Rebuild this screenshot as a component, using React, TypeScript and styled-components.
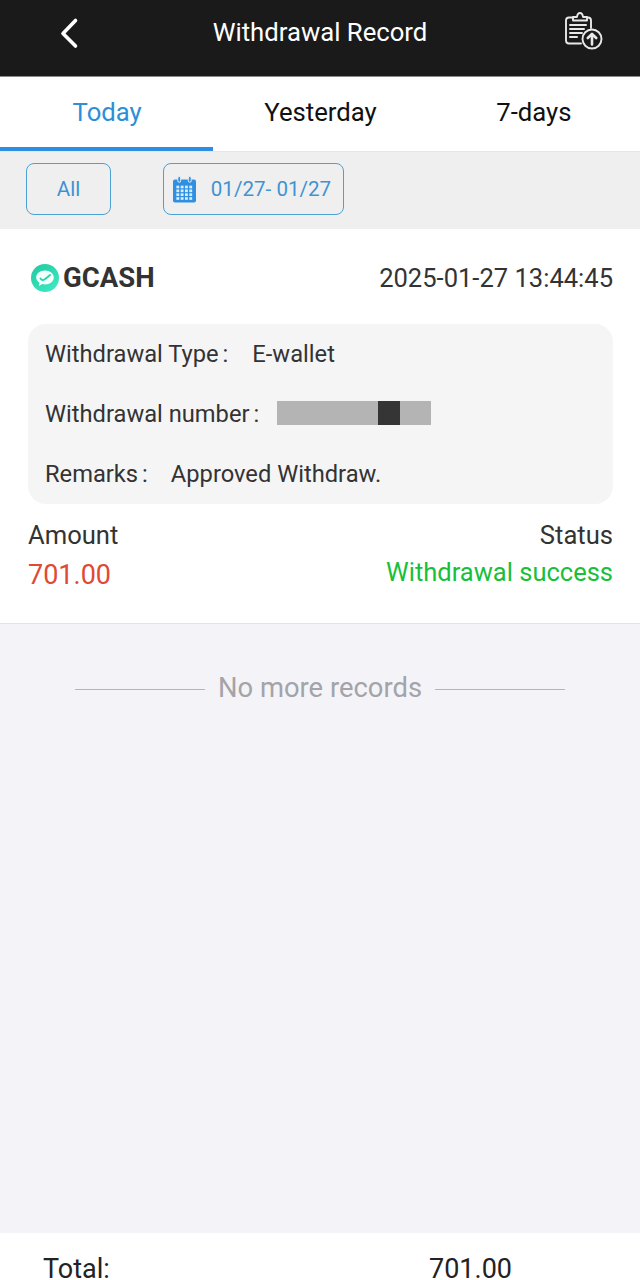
import React from "react";
import styled, { createGlobalStyle } from "styled-components";

const Global = createGlobalStyle`
  html, body { margin: 0; padding: 0; background: #f3f3f8; }
  body { font-family: Roboto, "Liberation Sans", sans-serif; }
`;

const Page = styled.div`
  width: 640px;
  height: 1280px;
  display: flex;
  flex-direction: column;
  overflow: hidden;
  background: #f3f3f8;
`;

const Header = styled.header`
  height: 77px;
  flex: none;
  display: grid;
  grid-template-columns: 1fr auto 1fr;
  align-items: center;
  padding: 0 37px 13px;
  box-sizing: border-box;
  background: #1a1a1a;
  border-bottom: 1px solid #8a8a8a;
  color: #fff;
`;

const Title = styled.h1`
  margin: 0;
  font-size: 25.7px;
  line-height: 32px;
  font-weight: 400;
`;

const BackIcon = styled.svg`
  display: block;
  justify-self: start;
  margin: 2px 0 0 21px;
`;

const UploadIcon = styled.svg`
  display: block;
  justify-self: end;
  margin-bottom: 3px;
`;

const Tabs = styled.nav`
  height: 75px;
  flex: none;
  display: grid;
  grid-template-columns: repeat(3, 1fr);
  background: #fff;
  border-bottom: 1px solid #e6e6e6;
  box-sizing: border-box;
`;

const Tab = styled.div<{ $active?: boolean }>`
  display: flex;
  align-items: center;
  justify-content: center;
  padding-left: 1px;
  font-size: 25.7px;
  color: ${(p) => (p.$active ? "#2e8fd6" : "#111")};
  border-bottom: 4px solid ${(p) => (p.$active ? "#2e8fe0" : "transparent")};
  box-sizing: border-box;
`;

const FilterBar = styled.div`
  height: 77px;
  flex: none;
  display: flex;
  align-items: flex-start;
  gap: 52px;
  padding: 11px 26px 0;
  box-sizing: border-box;
  background: #efeff0;
`;

const FilterButton = styled.div<{ $w: number; $trail?: number }>`
  width: ${(p) => p.$w}px;
  height: 52px;
  display: flex;
  align-items: center;
  justify-content: center;
  gap: 15px;
  padding-right: ${(p) => p.$trail ?? 0}px;
  box-sizing: border-box;
  border: 1px solid #4ba1d4;
  border-radius: 8px;
  color: #3f93d3;
  font-size: 20.6px;
`;

const Card = styled.section`
  height: 395px;
  flex: none;
  padding: 0 27px 0 28px;
  box-sizing: border-box;
  background: #fff;
  border-bottom: 1px solid #e3e3e6;
  display: flex;
  flex-direction: column;
`;

const CardTop = styled.div`
  height: 95px;
  flex: none;
  display: flex;
  align-items: center;
  justify-content: space-between;
  padding-top: 2px;
  box-sizing: border-box;
`;

const Brand = styled.div`
  display: flex;
  align-items: center;
  gap: 4px;
  padding-left: 3px;
  font-size: 27.5px;
  font-weight: 700;
  color: #333;
`;

const DateText = styled.div`
  font-size: 25.55px;
  color: #333;
`;

const Details = styled.div`
  height: 180px;
  flex: none;
  padding: 0 17px;
  display: flex;
  flex-direction: column;
  justify-content: space-around;
  box-sizing: border-box;
  background: #f5f5f6;
  border-radius: 18px;
`;

const DetailRow = styled.div`
  display: flex;
  align-items: center;
  font-size: 23.7px;
  color: #333;
`;

const Label = styled.span<{ $gap: number }>`
  margin-right: ${(p) => p.$gap}px;
`;

const Colon = styled.span`
  margin-left: 4px;
`;

const Redacted = styled.div`
  width: 154px;
  height: 24px;
  margin-bottom: 2px;
  display: flex;
  justify-content: flex-end;
  padding-right: 31px;
  box-sizing: border-box;
  background: #b4b4b4;
`;

const RedactedBlock = styled.div`
  width: 22px;
  background: #353535;
`;

const Summary = styled.div`
  display: flex;
  justify-content: space-between;
  padding-top: 15px;
`;

const SummaryCol = styled.div<{ $end?: boolean }>`
  display: flex;
  flex-direction: column;
  align-items: ${(p) => (p.$end ? "flex-end" : "flex-start")};
  gap: 5px;
`;

const SummaryLabel = styled.div`
  font-size: 25.6px;
  line-height: 32px;
  color: #333;
`;

const AmountValue = styled.div`
  font-size: 27px;
  line-height: 39px;
  color: #e04a35;
`;

const StatusValue = styled.div`
  font-size: 25.5px;
  line-height: 32px;
  color: #17bf3a;
`;

const Main = styled.main`
  flex: 1;
  min-height: 0;
  padding-top: 46px;
  box-sizing: border-box;
`;

const NoMore = styled.div`
  display: flex;
  justify-content: center;
  align-items: center;
  gap: 13px;
  font-size: 27.4px;
  line-height: 36px;
  color: #a3a3a8;
`;

const Rule = styled.div`
  width: 130px;
  height: 1px;
  margin-top: 3px;
  background: #b5b5b8;
`;

const Footer = styled.footer`
  height: 47px;
  flex: none;
  display: grid;
  grid-template-columns: 386px auto;
  padding: 25px 0 0 43px;
  box-sizing: border-box;
  background: #fff;
  font-size: 27px;
  line-height: 22px;
  color: #222;
`;

const Calendar = styled.svg`
  display: block;
  flex: none;
`;

const Logo = styled.svg`
  display: block;
  flex: none;
`;

const Back = () => (
  <BackIcon width="22" height="34" viewBox="0 0 22 34" fill="none" stroke="#fff" strokeWidth="3.6" strokeLinecap="round" strokeLinejoin="round">
    <path d="M17.5 4.5 5 17.5l12.500 12.500" />
  </BackIcon>
);

const ClipboardUp = () => (
  <UploadIcon width="40" height="40" viewBox="0 0 40 40" fill="none" stroke="#e8e8e8" strokeWidth="1.9" strokeLinecap="round" strokeLinejoin="round">
    <path d="M18 33.5H6Q3 33.5 3 30.5V10.5Q3 7.5 6 7.5H10" />
    <path d="M24 7.5h1Q28 7.5 28 10.5V18" />
    <path d="M10 10.5V7H14Q14.5 3 17 3t3 4h4v3.5z" />
    <path d="M7 15h16M7 19h14M7 23h12M7 27h7" strokeWidth="2" />
    <circle cx="29" cy="29" r="9.5" fill="#1a1a1a" />
    <path d="M29 34.5v-10.5M24.8 28 29 23.800l4.200 4.200" strokeWidth="2.6" />
  </UploadIcon>
);

const CalendarIcon = () => (
  <Calendar width="23" height="28" viewBox="0 0 24 28">
    <path d="M2 4h20a2 2 0 0 1 2 2v20a2 2 0 0 1-2 2H2a2 2 0 0 1-2-2V6a2 2 0 0 1 2-2z" fill="#2f8fe0" />
    <rect x="5" y="1" width="3" height="6" rx="1.5" fill="#2f8fe0" stroke="#efeff0" strokeWidth="1" />
    <rect x="16" y="1" width="3" height="6" rx="1.5" fill="#2f8fe0" stroke="#efeff0" strokeWidth="1" />
    {[0, 1, 2, 3].map((r) =>
      [0, 1, 2, 3].map((c) => (
        <rect key={`${r}-${c}`} x={3.5 + c * 4.5} y={10.5 + r * 4} width="3" height="2.8" fill="#d9ecfb" />
      ))
    )}
  </Calendar>
);

const GcashLogo = () => (
  <Logo width="28" height="28" viewBox="0 0 28 28">
    <defs>
      <linearGradient id="gc" x1="0" y1="0" x2="0.7" y2="1">
        <stop offset="0" stopColor="#22c79f" />
        <stop offset="1" stopColor="#3ce8c2" />
      </linearGradient>
    </defs>
    <circle cx="14" cy="14" r="14" fill="url(#gc)" />
    <path d="M14 6.5c5 0 8.800 3 8.800 7s-3.800 7-8.800 7c-1 0-2-.1-2.800-.4L8 22l.3-3.500c-1.900-1.200-3.100-3-3.100-5C5.200 9.500 9 6.500 14 6.500z" fill="#f2fffb" />
    <path d="M9.5 14.5c1 1.500 2.500 2 3.500 1.300 2-1.300 4-3 6-4.800" fill="none" stroke="#2fd3ac" strokeWidth="1.9" strokeLinecap="round" />
  </Logo>
);

export default function App() {
  return (
    <Page>
      <Global />
      <Header>
        <Back />
        <Title>Withdrawal Record</Title>
        <ClipboardUp />
      </Header>
      <Tabs>
        <Tab $active>Today</Tab>
        <Tab>Yesterday</Tab>
        <Tab>7-days</Tab>
      </Tabs>
      <FilterBar>
        <FilterButton $w={85}>All</FilterButton>
        <FilterButton $w={181} $trail={3}>
          <CalendarIcon />
          <span>01/27- 01/27</span>
        </FilterButton>
      </FilterBar>
      <Card>
        <CardTop>
          <Brand>
            <GcashLogo />
            GCASH
          </Brand>
          <DateText>2025-01-27 13:44:45</DateText>
        </CardTop>
        <Details>
          <DetailRow>
            <Label $gap={24}>Withdrawal Type<Colon>:</Colon></Label>
            E-wallet
          </DetailRow>
          <DetailRow>
            <Label $gap={18}>Withdrawal number<Colon>:</Colon></Label>
            <Redacted>
              <RedactedBlock />
            </Redacted>
          </DetailRow>
          <DetailRow>
            <Label $gap={23}>Remarks<Colon>:</Colon></Label>
            Approved Withdraw.
          </DetailRow>
        </Details>
        <Summary>
          <SummaryCol>
            <SummaryLabel>Amount</SummaryLabel>
            <AmountValue>701.00</AmountValue>
          </SummaryCol>
          <SummaryCol $end>
            <SummaryLabel>Status</SummaryLabel>
            <StatusValue>Withdrawal success</StatusValue>
          </SummaryCol>
        </Summary>
      </Card>
      <Main>
        <NoMore>
          <Rule />
          No more records
          <Rule />
        </NoMore>
      </Main>
      <Footer>
        <span>Total:</span>
        <span>701.00</span>
      </Footer>
    </Page>
  );
}
